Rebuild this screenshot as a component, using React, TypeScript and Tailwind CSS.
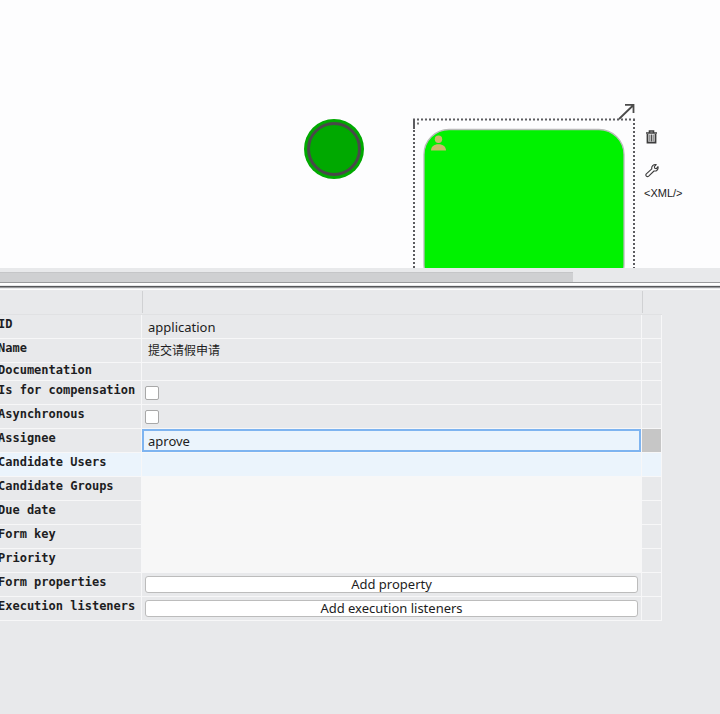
import React, { ReactNode } from "react";

const sans = "font-['Noto_Sans','Noto_Sans_CJK_SC',sans-serif]";

function Row({
  label,
  children,
  htmlFor,
  height = "h-6",
  leading = "leading-[18px]",
  rowTone = "",
  valueTone = "",
  endTone = "",
}: {
  label: string;
  children?: ReactNode;
  htmlFor?: string;
  height?: string;
  leading?: string;
  rowTone?: string;
  valueTone?: string;
  endTone?: string;
}) {
  return (
    <tr className={`${height} ${rowTone}`}>
      <th
        scope="row"
        className={`border-r border-b border-[#f7f7f8] p-0 text-left align-top font-['DejaVu_Sans_Mono',monospace] text-xs font-bold whitespace-nowrap ${leading}`}
      >
        <label htmlFor={htmlFor} className="-ml-0.5 block">
          {label}
        </label>
      </th>
      <td className={`border-r border-b border-[#f7f7f8] p-0 align-middle ${valueTone}`}>{children}</td>
      <td className={`border-r border-b border-[#f7f7f8] p-0 ${endTone}`} />
    </tr>
  );
}

const blank = "bg-[#f7f7f7]";
const field = `block w-full bg-transparent px-1.5 leading-5 outline-none ${sans}`;
const check =
  "ml-[3px] block size-3.5 appearance-none rounded-[2px] border border-[#a8a8a8] bg-white checked:bg-[#7eb4f0]";
const action = `mx-[3px] block h-[17px] w-[calc(100%-6px)] rounded-[3px] border border-[#bcbcbc] bg-white text-[13px] leading-[15px] ${sans}`;

function Diagram() {
  return (
    <section aria-label="Diagram" className="relative h-[268px] overflow-hidden bg-[#fdfdfe]">
      <svg className="absolute top-0 left-0" width="720" height="268" fill="none">
        <circle cx="334" cy="149" r="30" fill="#00a900" />
        <circle cx="334" cy="149" r="25.5" stroke="#494949" strokeWidth="3" />
        <rect x="424" y="129.5" width="200" height="160" rx="25" fill="#00f200" stroke="#bbbbbb" strokeWidth="1.3" />
        <circle cx="438.5" cy="139.2" r="3.7" fill="#ccb66c" />
        <path d="M431 150.5c0-4 3-6.300 7.500-6.300s7.500 2.300 7.500 6.300z" fill="#ccb66c" />
        <path d="M414 268V119.500M634 119v149" stroke="#5c5c60" strokeWidth="2" strokeDasharray="2 2" />
        <path d="M413 119.500h222" stroke="#5c5c60" strokeWidth="2" strokeDasharray="2 2" />
        <path d="M414 119v10" stroke="#5c5c60" strokeWidth="2" />
        <path d="M417 123.500h2" stroke="#777" strokeWidth="2" />
        <path d="M619 119l14.500-14M625 104.800h8.500v8.200" stroke="#4b4b4b" strokeWidth="1.800" />
      </svg>
      <button aria-label="Delete" className="absolute top-[130px] left-[645px]">
        <svg width="13" height="14" fill="none" stroke="#3d3d3d">
          <path d="M1 3h11M4.500 2.500v-1.500h4v1.500" strokeWidth="1.600" />
          <path d="M2.500 4v8.700h8V4" strokeWidth="1.800" />
          <path d="M4.900 4.500v7M6.500 4.500v7M8.100 4.500v7" strokeWidth=".9" />
        </svg>
      </button>
      <button aria-label="Configure" className="absolute top-[163px] left-[645px]">
        <svg width="14" height="15" fill="none" stroke="#3d3d3d" strokeWidth="1.100" strokeLinejoin="round">
          <path d="M1.300 10.800l5.500-4.900c-.5-2.400 1.400-4.600 4.400-4.300l-1.900 2 .5 1.700 1.600.4 1.600-2c.6 2.700-1.400 4.700-4 4.300l-5.300 5.200c-1.700 1.400-3.700-.8-2.400-2.400z" />
        </svg>
      </button>
      <button className="absolute top-[187px] left-[644px] font-['Liberation_Sans',sans-serif] text-[11px] leading-3 text-[#222]">
        &lt;XML/&gt;
      </button>
    </section>
  );
}

export default function App() {
  return (
    <main className="min-h-screen overflow-hidden bg-[#e8e9eb] text-[#1d1d22]">
      <Diagram />
      <div className="h-[15px] border-b border-[#999a9c] pt-1">
        <div className="h-2.5 w-[573px] border-t border-[#c5c6c8] bg-[#cfd0d2]" />
      </div>
      <div className="h-[7px] border-t-2 border-b border-white">
        <div className="mt-px h-0.5 border-b border-[#999a9c] bg-[#555659]" />
      </div>
      <div className="mr-[58px]">
        <table className="w-full table-fixed border-separate border-spacing-0">
          <colgroup>
            <col className="w-[142px]" />
            <col />
            <col className="w-5" />
          </colgroup>
          <thead>
            <tr className="h-[25px]">
              <td className="border-b border-[#e0e1e3] p-0" />
              <td className="border-b border-[#e0e1e3] px-0 py-px">
                <div className="h-[22px] border-l border-[#d0d1d3]" />
              </td>
              <td className="border-b border-[#e0e1e3] px-0 py-px">
                <div className="h-[22px] border-l border-[#d0d1d3]" />
              </td>
            </tr>
          </thead>
          <tbody>
            <Row label="ID" htmlFor="id">
              <input id="id" className={`${field} text-[13px]`} defaultValue="application" />
            </Row>
            <Row label="Name" htmlFor="name">
              <input id="name" className={`${field} text-xs`} defaultValue="提交请假申请" />
            </Row>
            <Row label="Documentation" height="h-[18px]" leading="leading-[14px]" />
            <Row label="Is for compensation" htmlFor="comp">
              <input id="comp" type="checkbox" className={check} />
            </Row>
            <Row label="Asynchronous" htmlFor="async">
              <input id="async" type="checkbox" className={check} />
            </Row>
            <Row label="Assignee" htmlFor="assignee" endTone="bg-[#c6c6c6]">
              <input
                id="assignee"
                className={`block h-[23px] w-full border-2 border-[#7eb4f0] bg-[#ebf4fc] px-1 text-[13px] leading-[18px] outline-none ${sans}`}
                defaultValue="aprove"
              />
            </Row>
            <Row label="Candidate Users" rowTone="bg-[#ebf4fc]" />
            <Row label="Candidate Groups" valueTone={blank} />
            <Row label="Due date" valueTone={blank} />
            <Row label="Form key" valueTone={blank} />
            <Row label="Priority" valueTone={blank} />
            <Row label="Form properties">
              <button className={action}>Add property</button>
            </Row>
            <Row label="Execution listeners">
              <button className={action}>Add execution listeners</button>
            </Row>
          </tbody>
        </table>
      </div>
    </main>
  );
}
